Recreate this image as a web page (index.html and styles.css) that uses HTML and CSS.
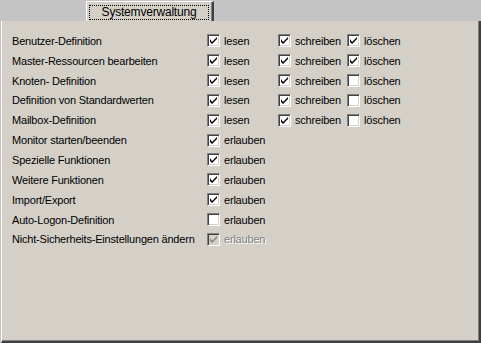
FILE: index.html
```html
<!DOCTYPE html>
<html lang="de">
<head>
    <meta charset="UTF-8">
    <title>Systemverwaltung</title>
    <link rel="stylesheet" href="styles.css">
</head>
<body>
    <div class="tabstrip">
        <div class="tab"><span class="focus">Systemverwaltung</span></div>
    </div>
    <div class="panel">
        <div class="row">
            <span class="name">Benutzer-Definition</span>
            <label class="opt"><span class="box checked"></span>lesen</label>
            <label class="opt"><span class="box checked"></span>schreiben</label>
            <label class="opt"><span class="box checked"></span>löschen</label>
        </div>
        <div class="row">
            <span class="name">Master-Ressourcen bearbeiten</span>
            <label class="opt"><span class="box checked"></span>lesen</label>
            <label class="opt"><span class="box checked"></span>schreiben</label>
            <label class="opt"><span class="box checked"></span>löschen</label>
        </div>
        <div class="row">
            <span class="name">Knoten- Definition</span>
            <label class="opt"><span class="box checked"></span>lesen</label>
            <label class="opt"><span class="box checked"></span>schreiben</label>
            <label class="opt"><span class="box"></span>löschen</label>
        </div>
        <div class="row">
            <span class="name">Definition von Standardwerten</span>
            <label class="opt"><span class="box checked"></span>lesen</label>
            <label class="opt"><span class="box checked"></span>schreiben</label>
            <label class="opt"><span class="box"></span>löschen</label>
        </div>
        <div class="row">
            <span class="name">Mailbox-Definition</span>
            <label class="opt"><span class="box checked"></span>lesen</label>
            <label class="opt"><span class="box checked"></span>schreiben</label>
            <label class="opt"><span class="box"></span>löschen</label>
        </div>
        <div class="row">
            <span class="name">Monitor starten/beenden</span>
            <label class="opt"><span class="box checked"></span>erlauben</label>
        </div>
        <div class="row">
            <span class="name">Spezielle Funktionen</span>
            <label class="opt"><span class="box checked"></span>erlauben</label>
        </div>
        <div class="row">
            <span class="name">Weitere Funktionen</span>
            <label class="opt"><span class="box checked"></span>erlauben</label>
        </div>
        <div class="row">
            <span class="name">Import/Export</span>
            <label class="opt"><span class="box checked"></span>erlauben</label>
        </div>
        <div class="row">
            <span class="name">Auto-Logon-Definition</span>
            <label class="opt"><span class="box"></span>erlauben</label>
        </div>
        <div class="row">
            <span class="name">Nicht-Sicherheits-Einstellungen ändern</span>
            <label class="opt disabled"><span class="box checked"></span>erlauben</label>
        </div>
    </div>
</body>
</html>
```

FILE: styles.css
```css
html, body {
    margin: 0;
    padding: 0;
}
body {
    width: 481px;
    height: 343px;
    background: #c4c4c4;
    font-family: "Liberation Sans", Arial, sans-serif;
    font-size: 11px;
    letter-spacing: -0.2px;
    color: #000;
    overflow: hidden;
}
.tabstrip {
    height: 21px;
    display: flex;
    align-items: flex-end;
    padding-left: 86px;
}
.tab {
    box-sizing: border-box;
    width: 128px;
    height: 20px;
    background: #d4d0c8;
    border-top: 1px solid #fff;
    border-left: 1px solid #fff;
    border-right: 2px solid #404040;
    box-shadow: inset -1px 0 0 #808080;
    display: flex;
    align-items: center;
    justify-content: center;
    padding: 1px 3px 0 2px;
}
.focus {
    flex: 1;
    text-align: center;
    border: 1px dotted #000;
    line-height: 13px;
    font-size: 12px;
}
.panel {
    box-sizing: border-box;
    height: 322px;
    background: #d4d0c8;
    border-left: 1px solid #fff;
    border-right: 2px solid #404040;
    border-bottom: 2px solid #404040;
    box-shadow: inset -1px -1px 0 #808080;
    margin-left: 1px;
    padding: 10px 0 0 10px;
}
.row {
    display: grid;
    grid-template-columns: 195px 71px 69px auto;
    align-items: center;
    height: 19.85px;
}
.name {
    white-space: nowrap;
}
.opt {
    display: flex;
    align-items: center;
    gap: 4px;
    white-space: nowrap;
}
.box {
    box-sizing: border-box;
    width: 13px;
    height: 13px;
    background: #fff;
    border-top: 1px solid #808080;
    border-left: 1px solid #808080;
    border-right: 1px solid #fff;
    border-bottom: 1px solid #fff;
    box-shadow: inset 1px 1px 0 #404040, inset -1px -1px 0 #d4d0c8;
    position: relative;
}
.box.checked::after {
    content: "";
    position: absolute;
    left: 2px;
    top: 2px;
    width: 7px;
    height: 7px;
    background: no-repeat center / 7px 7px url("data:image/svg+xml;utf8,<svg xmlns='http://www.w3.org/2000/svg' width='7' height='7' viewBox='0 0 7 7'><path d='M0 2v3l2 2l5-5v-2l-5 5z' fill='black'/></svg>");
}
.disabled {
    color: #808080;
    text-shadow: 1px 1px 0 #fff;
}
.disabled .box {
    background: #d4d0c8;
}
.disabled .box.checked::after {
    background-image: url("data:image/svg+xml;utf8,<svg xmlns='http://www.w3.org/2000/svg' width='7' height='7' viewBox='0 0 7 7'><path d='M0 2v3l2 2l5-5v-2l-5 5z' fill='%23808080'/></svg>");
}
```
